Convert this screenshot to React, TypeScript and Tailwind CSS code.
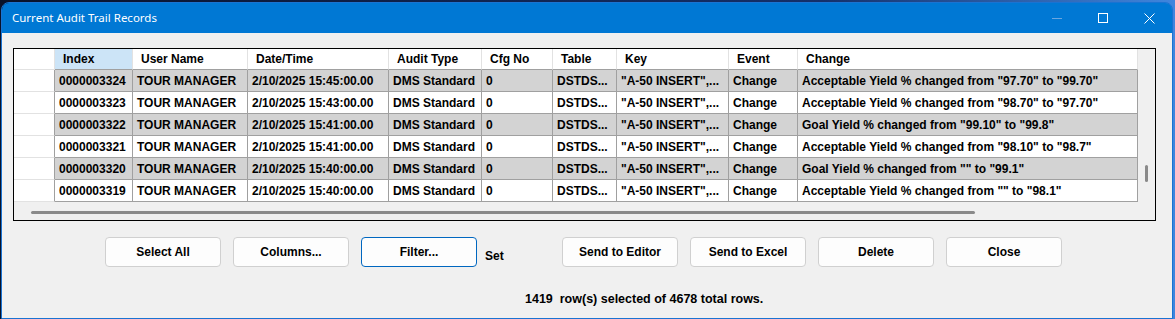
import React from 'react';

const cols = [
    { key: 'index', label: 'Index', w: 'w-[78px]' },
    { key: 'user', label: 'User Name', w: 'w-[115px]' },
    { key: 'date', label: 'Date/Time', w: 'w-[141px]' },
    { key: 'type', label: 'Audit Type', w: 'w-[93px]' },
    { key: 'cfg', label: 'Cfg No', w: 'w-[71px]' },
    { key: 'table', label: 'Table', w: 'w-[64px]' },
    { key: 'key', label: 'Key', w: 'w-[112px]' },
    { key: 'event', label: 'Event', w: 'w-[69px]' },
    { key: 'change', label: 'Change', w: 'w-[340px]' },
] as const;

type Row = Record<(typeof cols)[number]['key'], string>;

const base = {
    user: 'TOUR MANAGER',
    type: 'DMS Standard',
    cfg: '0',
    table: 'DSTDS...',
    key: '"A-50 INSERT",...',
    event: 'Change',
};

const rows: Row[] = [
    { ...base, index: '0000003324', date: '2/10/2025 15:45:00.00', change: 'Acceptable Yield % changed from "97.70" to "99.70"' },
    { ...base, index: '0000003323', date: '2/10/2025 15:43:00.00', change: 'Acceptable Yield % changed from "98.70" to "97.70"' },
    { ...base, index: '0000003322', date: '2/10/2025 15:41:00.00', change: 'Goal Yield % changed from "99.10" to "99.8"' },
    { ...base, index: '0000003321', date: '2/10/2025 15:41:00.00', change: 'Acceptable Yield % changed from "98.10" to "98.7"' },
    { ...base, index: '0000003320', date: '2/10/2025 15:40:00.00', change: 'Goal Yield % changed from "" to "99.1"' },
    { ...base, index: '0000003319', date: '2/10/2025 15:40:00.00', change: 'Acceptable Yield % changed from "" to "98.1"' },
];

const buttons = ['Select All', 'Columns...', 'Filter...'];
const buttons2 = ['Send to Editor', 'Send to Excel', 'Delete', 'Close'];

function Btn({ label, focused }: { label: string; focused?: boolean }) {
    return (
        <button
            className={`w-[116px] h-[30px] rounded-[4px] border bg-[#fdfdfd] text-[12px] font-bold text-black ${
                focused ? 'border-[#0067c0]' : 'border-[#d0d0d0]'
            }`}
        >
            {label}
        </button>
    );
}

export default function App() {
    return (
        <div className="w-[1175px] h-[319px] overflow-hidden pt-[2px] bg-[linear-gradient(90deg,#08122a,#14306a_70%,#3f86de)] font-['Liberation_Sans',Arial,sans-serif]">
            <div className="ml-[1px] w-[1172px] h-[317px] flex flex-col rounded-t-[8px] border border-[#1a73d2] overflow-hidden">
                {/* title bar */}
                <div className="h-[30px] bg-[#0078d4] flex items-center text-white">
                    <span className="pl-[10px] text-[11.5px] font-['Noto_Sans',sans-serif]">
                        Current Audit Trail Records
                    </span>
                    <div className="ml-auto flex h-full">
                        <div className="w-[46px] flex items-center justify-center">
                            <svg width="10" height="10" viewBox="0 0 10 10">
                                <line x1="0" y1="5.5" x2="10" y2="5.5" stroke="#6aa6e0" strokeWidth="1" />
                            </svg>
                        </div>
                        <div className="w-[46px] flex items-center justify-center">
                            <svg width="10" height="10" viewBox="0 0 10 10">
                                <rect x="0.5" y="0.5" width="9" height="9" fill="none" stroke="#fff" strokeWidth="1" />
                            </svg>
                        </div>
                        <div className="w-[46px] flex items-center justify-center">
                            <svg width="11" height="11" viewBox="0 0 11 11">
                                <path d="M0.5 0.5 L10.5 10.5 M10.5 0.5 L0.5 10.5" stroke="#fff" strokeWidth="1" />
                            </svg>
                        </div>
                    </div>
                </div>

                {/* body */}
                <div className="flex-1 bg-[#f0f0f0] pt-[15px]">
                    <div className="ml-[11px] w-[1143px] h-[173px] border border-black flex bg-[#f0f0f0]">
                        <div className="w-[1124px] flex flex-col">
                            <div className="flex h-[21px] bg-white text-[12px] font-bold">
                                <div className="w-[41px] border-r border-b border-r-[#e2e2e2] border-b-[#e2e2e2]" />
                                {cols.map((c, i) => (
                                    <div
                                        key={c.key}
                                        className={`${c.w} flex items-center pl-[8px] border-r border-b border-r-[#e2e2e2] border-b-[#a0a0a0] ${
                                            i === 0 ? 'bg-[#cce4f7]' : ''
                                        }`}
                                    >
                                        {c.label}
                                    </div>
                                ))}
                            </div>
                            {rows.map((r, ri) => (
                                <div
                                    key={r.index}
                                    className={`flex h-[22px] text-[12px] font-bold text-black ${
                                        ri % 2 === 0 ? 'bg-[#d3d3d3]' : 'bg-white'
                                    }`}
                                >
                                    <div className="w-[41px] bg-white border-r border-b border-r-[#a0a0a0] border-b-[#e2e2e2]" />
                                    {cols.map((c) => (
                                        <div
                                            key={c.key}
                                            className={`${c.w} flex items-center pl-[4px] whitespace-nowrap overflow-hidden border-r border-b border-[#a0a0a0]`}
                                        >
                                            {r[c.key]}
                                        </div>
                                    ))}
                                </div>
                            ))}
                            <div className="flex-1 pt-[9px] pl-[17px]">
                                <div className="w-[944px] h-[3px] rounded-full bg-[#8a8a8a]" />
                            </div>
                        </div>
                        <div className="w-[17px] pt-[116px] pl-[7px]">
                            <div className="w-[3px] h-[17px] rounded-full bg-[#8a8a8a]" />
                        </div>
                    </div>

                    {/* buttons */}
                    <div className="flex items-start pl-[103px] pt-[16px] text-[12px] font-bold">
                        <div className="flex gap-[12px]">
                            {buttons.map((b) => (
                                <Btn key={b} label={b} focused={b === 'Filter...'} />
                            ))}
                        </div>
                        <span className="ml-[8px] w-[77px] pt-[10px]">Set</span>
                        <div className="flex gap-[12px]">
                            {buttons2.map((b) => (
                                <Btn key={b} label={b} />
                            ))}
                        </div>
                    </div>

                    <div className="pl-[523px] pt-[23px] text-[12.5px] font-bold whitespace-pre">
                        1419  row(s) selected of 4678 total rows.
                    </div>
                </div>
            </div>
        </div>
    );
}
